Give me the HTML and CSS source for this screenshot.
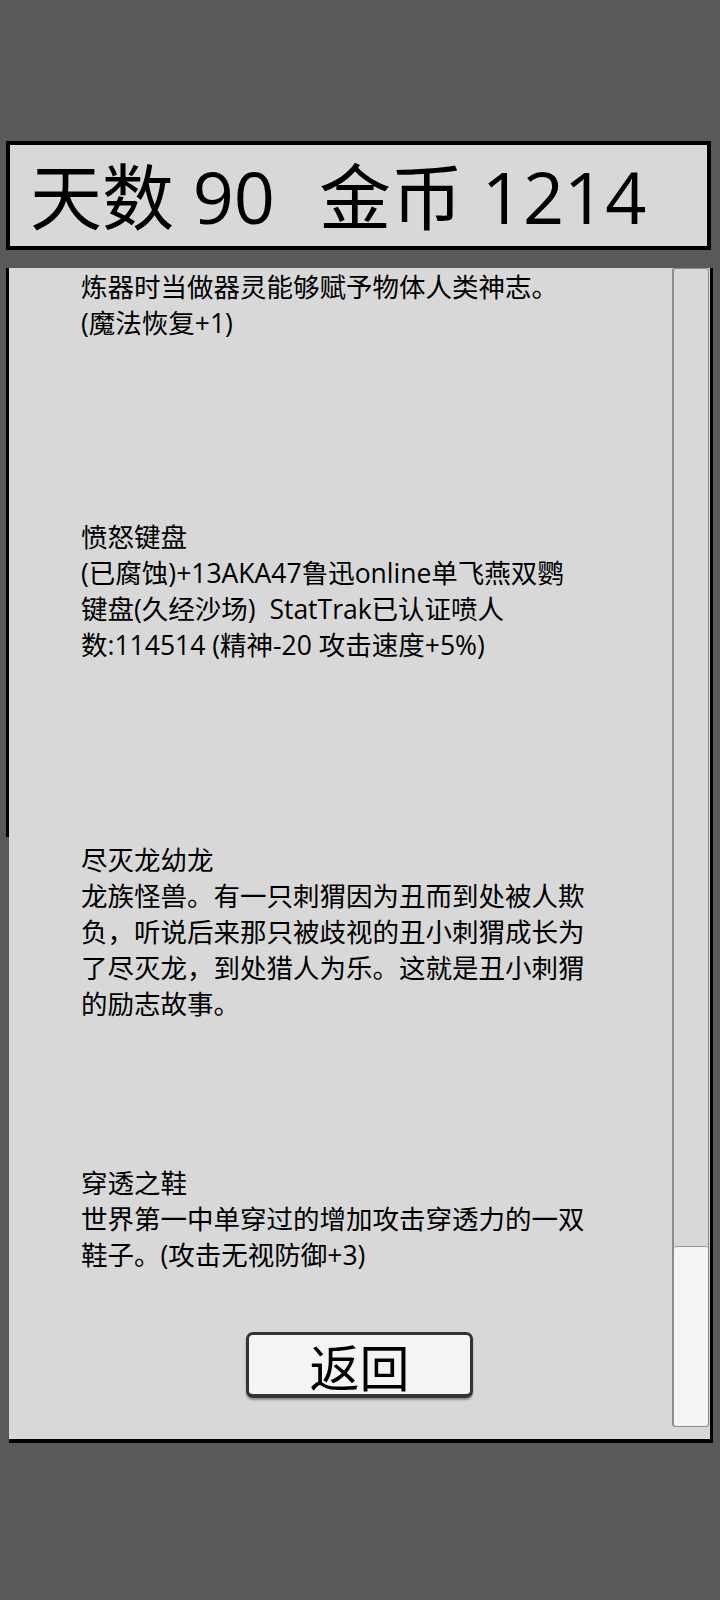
FILE: index.html
```html
<!DOCTYPE html>
<html lang="zh">
<head>
    <meta charset="UTF-8">
    <meta name="viewport" content="width=device-width, initial-scale=1.0">
    <title>背包</title>
    <link rel="stylesheet" href="styles.css">
</head>
<body>
    <div class="status-bar">
        <span class="stat">天数 90</span>
        <span class="stat">金币 1214</span>
    </div>

    <div class="panel">
        <div class="scroll-view">
            <div class="item-list">
                <div class="item item-partial">
                    <p>炼器时当做器灵能够赋予物体人类神志。<br>(魔法恢复+1)</p>
                </div>
                <div class="item">
                    <p>愤怒键盘<br>(已腐蚀)+13AKA47鲁迅online单飞燕双鹦<br>键盘(久经沙场)&nbsp; StatTrak已认证喷人<br>数:114514 (精神-20 攻击速度+5%)</p>
                </div>
                <div class="item">
                    <p>尽灭龙幼龙<br>龙族怪兽。有一只刺猬因为丑而到处被人欺<br>负，听说后来那只被歧视的丑小刺猬成长为<br>了尽灭龙，到处猎人为乐。这就是丑小刺猬<br>的励志故事。</p>
                </div>
                <div class="item">
                    <p>穿透之鞋<br>世界第一中单穿过的增加攻击穿透力的一双<br>鞋子。(攻击无视防御+3)</p>
                </div>
            </div>
            <div class="scrollbar">
                <div class="scroll-thumb"></div>
            </div>
        </div>
        <button class="back-button" type="button">返回</button>
    </div>
</body>
</html>
```

FILE: styles.css
```css
body {
    margin: 0;
    padding: 0;
    background: #595959;
    font-family: "Open Sans", "Noto Sans CJK SC", sans-serif;
    color: #000;
}

.status-bar {
    box-sizing: border-box;
    width: 705px;
    height: 109px;
    margin: 141px 0 0 6px;
    padding-left: 20px;
    display: flex;
    align-items: center;
    gap: 44px;
    background: #d8d8d8;
    border: 4px solid #000;
    font-size: 72px;
    line-height: 1;
}

.panel {
    position: relative;
    width: 701px;
    height: 1171px;
    margin: 18px 0 0 9px;
    background: #d8d8d8;
    border-right: 3px solid #000;
    border-bottom: 4px solid #000;
}

.panel::before {
    content: "";
    position: absolute;
    left: -3px;
    top: 0;
    width: 3px;
    height: 569px;
    background: #000;
}

.scroll-view {
    display: flex;
    height: 100%;
    overflow: hidden;
}

.item-list {
    flex: 1;
    padding: 1px 0 0 72px;
}

.item {
    min-height: 323px;
}

.item-partial {
    min-height: 250px;
}

.item p {
    margin: 0;
    font-size: 26.5px;
    line-height: 36px;
    white-space: nowrap;
}

.scrollbar {
    box-sizing: border-box;
    width: 37px;
    margin: 0 1px 12px 0;
    display: flex;
    flex-direction: column;
    justify-content: flex-end;
    border: 1px solid #8c8c8c;
    border-left-width: 2px;
    border-radius: 3px;
    background: #d8d8d8;
}

.scroll-thumb {
    height: 179px;
    background: #f5f5f5;
    border-top: 1px solid #999;
    border-radius: 3px;
}

.back-button {
    position: absolute;
    left: 237px;
    bottom: 41px;
    box-sizing: border-box;
    width: 227px;
    height: 66px;
    padding: 0;
    background: #f4f4f4;
    border: 3px solid #333;
    border-bottom-width: 4px;
    border-radius: 7px;
    box-shadow: 0 2px 2px rgba(0, 0, 0, 0.35);
    font-family: "Noto Sans CJK SC", sans-serif;
    font-size: 50px;
    line-height: 1;
    color: #000;
    cursor: pointer;
}
```
